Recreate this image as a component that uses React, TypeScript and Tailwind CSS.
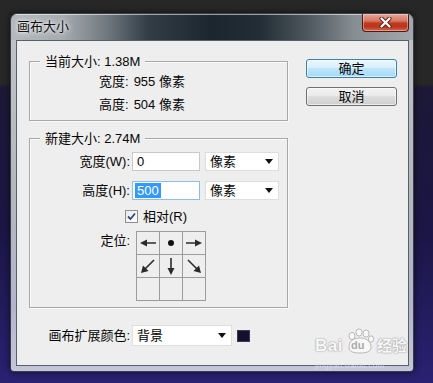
import React from "react";

function Arrow({ kind }: { kind: string }) {
  const c = "#2b2b2b";
  return (
    <svg width="22" height="22" viewBox="0 0 22 22">
      {kind === "l" && (
        <>
          <line x1="19" y1="11" x2="8" y2="11" stroke={c} strokeWidth="1.6" />
          <polygon points="3,11 10,7.5 10,14.5" fill={c} />
        </>
      )}
      {kind === "r" && (
        <>
          <line x1="3" y1="11" x2="14" y2="11" stroke={c} strokeWidth="1.6" />
          <polygon points="19,11 12,7.5 12,14.5" fill={c} />
        </>
      )}
      {kind === "c" && <circle cx="11" cy="11" r="3" fill="#111" />}
      {kind === "d" && (
        <>
          <line x1="11" y1="3" x2="11" y2="14" stroke={c} strokeWidth="1.6" />
          <polygon points="11,20 7.5,13 14.5,13" fill={c} />
        </>
      )}
      {kind === "dl" && (
        <>
          <line x1="17" y1="5" x2="8" y2="14" stroke={c} strokeWidth="1.6" />
          <polygon points="4,18 6,10.5 11.5,16" fill={c} />
        </>
      )}
      {kind === "dr" && (
        <>
          <line x1="5" y1="5" x2="14" y2="14" stroke={c} strokeWidth="1.6" />
          <polygon points="18,18 16,10.5 10.5,16" fill={c} />
        </>
      )}
    </svg>
  );
}

function DropArrow() {
  return (
    <svg width="8" height="5" viewBox="0 0 8 5">
      <polygon points="0,0 8,0 4,5" fill="#111" />
    </svg>
  );
}

function Select({ text, w, h }: { text: string; w: string; h: string }) {
  return (
    <div
      className={`${w} ${h} flex items-center justify-between bg-white border border-[#dedede] pl-[4px] pr-[5px]`}
    >
      <span className="leading-[17px]">{text}</span>
      <DropArrow />
    </div>
  );
}

export default function App() {
  const cells = ["l", "c", "r", "dl", "d", "dr", "", "", ""];
  return (
    <div className="relative w-[433px] h-[383px] overflow-hidden bg-[linear-gradient(180deg,#272727_0px,#272727_84px,#1c1836_88px,#1b1645_60%,#2a2172_100%)] font-['Liberation_Sans','Noto_Sans_CJK_SC',sans-serif] text-[13px] text-[#050505]">
      <div className="pl-[10px] pt-[13px]">
        {/* window */}
        <div className="w-[404px] h-[359px] rounded-t-[7px] rounded-b-[4px] border border-[#3a3f46] flex flex-col overflow-hidden shadow-[0_0_6px_rgba(0,0,0,0.6)]">
          {/* title bar */}
          <div className="h-[26px] flex items-start pl-[6px] pr-[4px] bg-[linear-gradient(90deg,#b5b9bd_0%,#a6abaf_13%,#6f787f_24%,#323d46_34%,#1c262e_50%,#222d35_62%,#4f585f_74%,#858c92_85%,#a2a8ad_100%)] shadow-[inset_0_1px_0_rgba(255,255,255,0.55)]">
            <span className="pt-[3px] leading-[19px] text-[#111] [text-shadow:0_0_6px_rgba(255,255,255,0.95),0_0_3px_rgba(255,255,255,0.95)]">
              画布大小
            </span>
            <div className="ml-auto w-[47px] h-[18px] rounded-b-[4px] border border-t-0 border-[#4f1b14] bg-[linear-gradient(180deg,#e3a898_0%,#d77864_40%,#c2381f_55%,#b9361f_75%,#d16a4f_100%)] shadow-[inset_0_0_0_1px_rgba(255,255,255,0.35)] flex items-center justify-center">
              <svg width="13" height="11" viewBox="0 0 13 11">
                <path d="M2.5 1.5 L10.5 9.5 M10.5 1.5 L2.5 9.5" stroke="#5a2318" strokeWidth="4" strokeLinecap="round" />
                <path d="M2.5 1.5 L10.5 9.5 M10.5 1.5 L2.5 9.5" stroke="#ffffff" strokeWidth="2.2" strokeLinecap="round" />
              </svg>
            </div>
          </div>
          {/* frame body */}
          <div className="flex-1 pl-[5px] pr-[4px] pb-[5px] bg-[linear-gradient(180deg,#bfc3c7_0%,#b4b8bd_45%,#b3b4cc_80%,#c6c6da_100%)]">
            {/* client */}
            <div className="w-[393px] h-[326px] border border-[#59606a] bg-[#eeeeee]">
              <div className="flex">
                <div className="ml-[12px] mt-[20px] flex flex-col">
                  {/* group 1 */}
                  <div className="relative w-[259px] h-[60px] border border-[#a8a8a8] shadow-[inset_1px_1px_0_#fafafa,1px_1px_0_#fafafa]">
                    <span className="absolute -top-[10px] left-[10px] px-[5px] bg-[#eeeeee] leading-[19px]">
                      当前大小: 1.38M
                    </span>
                    <div className="pt-[10px] pl-[69px] flex flex-col gap-[3px]">
                      <div className="h-[20px] leading-[20px] flex">
                        <span>宽度:</span>
                        <span className="ml-[5px]">955 像素</span>
                      </div>
                      <div className="h-[20px] leading-[20px] flex">
                        <span>高度:</span>
                        <span className="ml-[5px]">504 像素</span>
                      </div>
                    </div>
                  </div>
                  {/* group 2 */}
                  <div className="relative mt-[17px] w-[259px] h-[170px] border border-[#a8a8a8] shadow-[inset_1px_1px_0_#fafafa,1px_1px_0_#fafafa]">
                    <span className="absolute -top-[10px] left-[10px] px-[5px] bg-[#eeeeee] leading-[19px]">
                      新建大小: 2.74M
                    </span>
                    <div className="pt-[13px] flex flex-col">
                      <div className="h-[19px] flex items-center">
                        <span className="w-[100px] text-right leading-[19px]">宽度(W):</span>
                        <div className="ml-[2px] w-[68px] h-[19px] bg-white border border-[#c9c9c9] pl-[4px] leading-[17px]">
                          0
                        </div>
                        <div className="ml-[5px]">
                          <Select text="像素" w="w-[74px]" h="h-[19px]" />
                        </div>
                      </div>
                      <div className="mt-[10px] h-[19px] flex items-center">
                        <span className="w-[100px] text-right leading-[19px]">高度(H):</span>
                        <div className="ml-[2px] w-[68px] h-[19px] bg-white border border-[#8fbde6] pl-[2px] pt-[1px] flex items-start">
                          <span className="bg-[#3399ff] text-white px-[2px] leading-[15px]">500</span>
                        </div>
                        <div className="ml-[5px]">
                          <Select text="像素" w="w-[74px]" h="h-[19px]" />
                        </div>
                      </div>
                      <div className="mt-[10px] h-[13px] flex items-center">
                        <div className="ml-[95px] w-[13px] h-[13px] border border-[#8e8f8f] bg-[linear-gradient(135deg,#e8e8e8,#ffffff)] flex items-center justify-center">
                          <svg width="9" height="9" viewBox="0 0 9 9">
                            <path d="M1 4.5 L3.5 7 L8 1.5" stroke="#31457c" strokeWidth="1.8" fill="none" />
                          </svg>
                        </div>
                        <span className="ml-[5px] leading-[19px]">相对(R)</span>
                      </div>
                      <div className="mt-[8px] flex items-start">
                        <span className="w-[100px] text-right leading-[19px]">定位:</span>
                        <div className="ml-[6px] grid grid-cols-[22px_22px_22px] grid-rows-[22px_22px_22px] gap-[1px] border border-[#9c9c9c] bg-[#9c9c9c]">
                          {cells.map((k, i) => (
                            <div key={i} className="bg-[#eeeeee] flex items-center justify-center">
                              {k && <Arrow kind={k} />}
                            </div>
                          ))}
                        </div>
                      </div>
                    </div>
                  </div>
                </div>
                {/* buttons */}
                <div className="ml-[18px] mt-[18px] flex flex-col gap-[9px]">
                  <div className="w-[91px] h-[19px] rounded-[3px] border border-[#3c7fb1] bg-[linear-gradient(180deg,#eaf6fd_0%,#d9f0fc_45%,#bee6fd_50%,#a7d9f5_100%)] shadow-[inset_0_0_0_1px_rgba(255,255,255,0.6)] flex items-center justify-center leading-[17px]">
                    确定
                  </div>
                  <div className="w-[91px] h-[19px] rounded-[3px] border border-[#707070] bg-[linear-gradient(180deg,#f2f2f2_0%,#ebebeb_45%,#dddddd_50%,#cfcfcf_100%)] shadow-[inset_0_0_0_1px_rgba(255,255,255,0.6)] flex items-center justify-center leading-[17px]">
                    取消
                  </div>
                </div>
              </div>
              {/* bottom row */}
              <div className="mt-[17px] ml-[13px] flex items-center h-[21px]">
                <span className="w-[100px] text-right leading-[21px]">画布扩展颜色:</span>
                <div className="ml-[2px]">
                  <Select text="背景" w="w-[100px]" h="h-[21px]" />
                </div>
                <div className="ml-[5px] w-[13px] h-[12px] bg-[#140f2e] border border-[#3b3a4f]" />
              </div>
            </div>
          </div>
        </div>
      </div>
      {/* watermark */}
      <div className="absolute left-[315px] top-[328px] flex flex-col items-start opacity-80">
        <div className="flex items-end text-[#fbfbfb] [text-shadow:0_0_1px_#777,0_0_2px_#999]">
          <span className="font-['Liberation_Sans',sans-serif] font-bold text-[17px] leading-[17px] tracking-[0.5px]">Bai</span>
          <div className="relative w-[32px] h-[26px] mx-[1px]">
            <svg width="32" height="26" viewBox="0 0 32 26" className="absolute left-0 top-0">
              <g fill="#fbfbfb" stroke="#9a9a9a" strokeWidth="0.8">
                <ellipse cx="8" cy="8" rx="3" ry="3.6" />
                <ellipse cx="15" cy="4.5" rx="3" ry="3.6" />
                <ellipse cx="22" cy="5.5" rx="3" ry="3.6" />
                <ellipse cx="27" cy="11" rx="2.6" ry="3.2" />
                <path d="M5 19 C5 12 11 10 16 10 C22 10 27 13 27 19 C27 24 22 25 16 25 C10 25 5 24 5 19 Z" />
              </g>
            </svg>
            <span className="absolute left-[7px] top-[12px] font-['Liberation_Sans',sans-serif] font-bold text-[11px] leading-[11px] text-[#9a9a9a] [text-shadow:none]">du</span>
          </div>
          <span className="text-[15px] leading-[17px] font-bold">经验</span>
        </div>
        <span className="mt-[8px] text-[8px] leading-[8px] text-[#dcdcf0] font-['Liberation_Sans',sans-serif] tracking-[0.3px]">jingyan.baidu.com</span>
      </div>
    </div>
  );
}
